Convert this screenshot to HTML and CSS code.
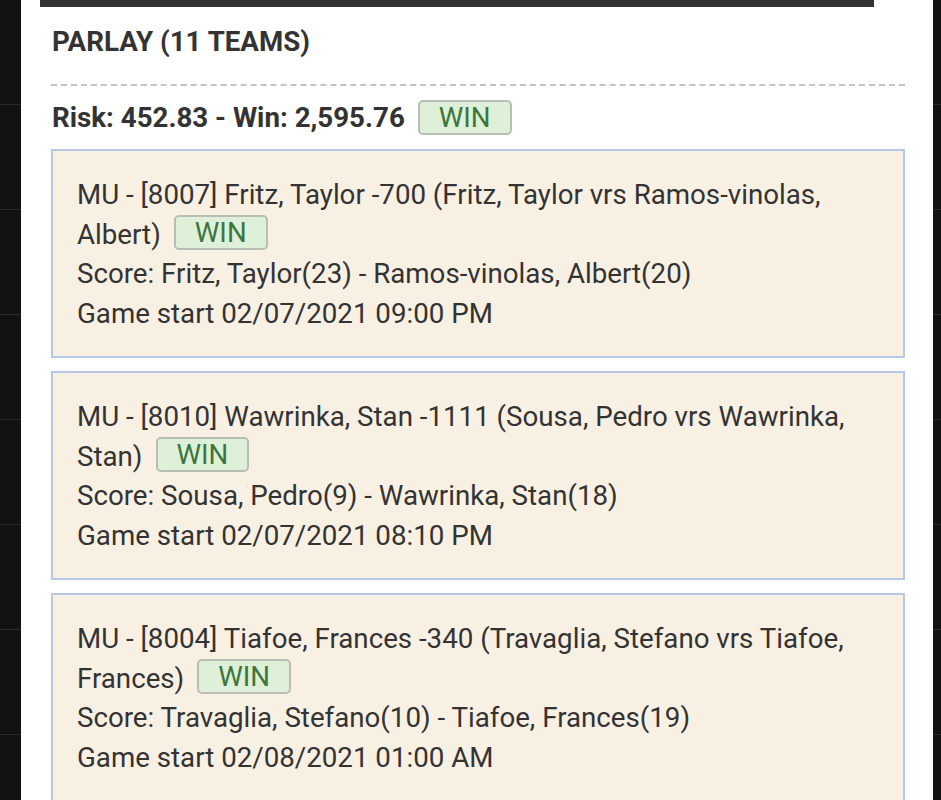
FILE: index.html
```html
<!DOCTYPE html>
<html lang="en">
<head>
    <meta charset="UTF-8">
    <meta name="viewport" content="width=device-width, initial-scale=1.0">
    <title>Bet Detail</title>
<link rel="stylesheet" href="styles.css">
</head>
<body>
    <div class="page">
        <!-- Left rail -->
        <aside class="rail rail-left"></aside>

        <!-- Ticket panel -->
        <main class="panel">
            <div class="top-bar"></div>

            <div class="ticket">
                <h2 class="ticket-title">PARLAY (11 TEAMS)</h2>

                <div class="ticket-summary">
                    Risk: 452.83 - Win: 2,595.76 <span class="badge">WIN</span>
                </div>

                <div class="leg">
                    <p>MU - [8007] Fritz, Taylor -700 (Fritz, Taylor vrs Ramos-vinolas, Albert)<span class="badge">WIN</span></p>
                    <p>Score: Fritz, Taylor(23) - Ramos-vinolas, Albert(20)</p>
                    <p>Game start 02/07/2021 09:00 PM</p>
                </div>

                <div class="leg">
                    <p>MU - [8010] Wawrinka, Stan -1111 (Sousa, Pedro vrs Wawrinka, Stan)<span class="badge">WIN</span></p>
                    <p>Score: Sousa, Pedro(9) - Wawrinka, Stan(18)</p>
                    <p>Game start 02/07/2021 08:10 PM</p>
                </div>

                <div class="leg">
                    <p>MU - [8004] Tiafoe, Frances -340 (Travaglia, Stefano vrs Tiafoe, Frances)<span class="badge">WIN</span></p>
                    <p>Score: Travaglia, Stefano(10) - Tiafoe, Frances(19)</p>
                    <p>Game start 02/08/2021 01:00 AM</p>
                </div>
            </div>
        </main>

        <!-- Right rail -->
        <aside class="rail rail-right"></aside>
    </div>
</body>
</html>
```

FILE: styles.css
```css
/* Theme Variables */
:root {
    --rail-bg: #121212;
    --rail-line: #2a2a2a;
    --panel-bg: #ffffff;
    --text-color: #333333;
    --leg-bg: #f9f0e4;
    --leg-border: #b6c8e6;
    --win-bg: #dff0d8;
    --win-text: #3c763d;
    --win-border: #b8beb6;
}

/* General Styling */
body {
    margin: 0;
    background-color: var(--rail-bg);
    font-family: 'Roboto', 'Liberation Sans', sans-serif;
    color: var(--text-color);
}

.page {
    display: flex;
    min-height: 800px;
}

.rail {
    background-color: var(--rail-bg);
    background-image: repeating-linear-gradient(
        to bottom,
        transparent 0,
        transparent 104px,
        var(--rail-line) 104px,
        var(--rail-line) 105px
    );
}

.rail-left {
    width: 21px;
}

.rail-right {
    width: 8px;
}

.panel {
    flex: 1;
    background-color: var(--panel-bg);
    overflow: hidden;
}

.top-bar {
    height: 7px;
    margin: 0 59px 0 19px;
    background-color: #333;
}

.ticket {
    padding: 0 28px 0 30px;
}

.ticket-title {
    margin: 0;
    padding: 20px 0 27px 1px;
    font-size: 27.7px;
    line-height: 30px;
    font-weight: 700;
    border-bottom: 2px dashed #c4c4c4;
}

.ticket-summary {
    margin: 14px 0 14px;
    padding-left: 1px;
    font-size: 27.7px;
    font-weight: 700;
    line-height: 35px;
}

.badge {
    display: inline-block;
    margin-left: 6px;
    padding: 0 19px;
    line-height: 31px;
    font-size: 27.7px;
    font-weight: 400;
    color: var(--win-text);
    background-color: var(--win-bg);
    border: 2px solid var(--win-border);
    border-radius: 5px;
    vertical-align: top;
}

.leg {
    margin-bottom: 13px;
    padding: 24px 24px 23px;
    background-color: var(--leg-bg);
    border: 2px solid var(--leg-border);
    font-size: 27.7px;
    line-height: 39.5px;
}

.leg p {
    margin: 0;
}

.leg .badge {
    margin-left: 13px;
    vertical-align: 2px;
}
```
